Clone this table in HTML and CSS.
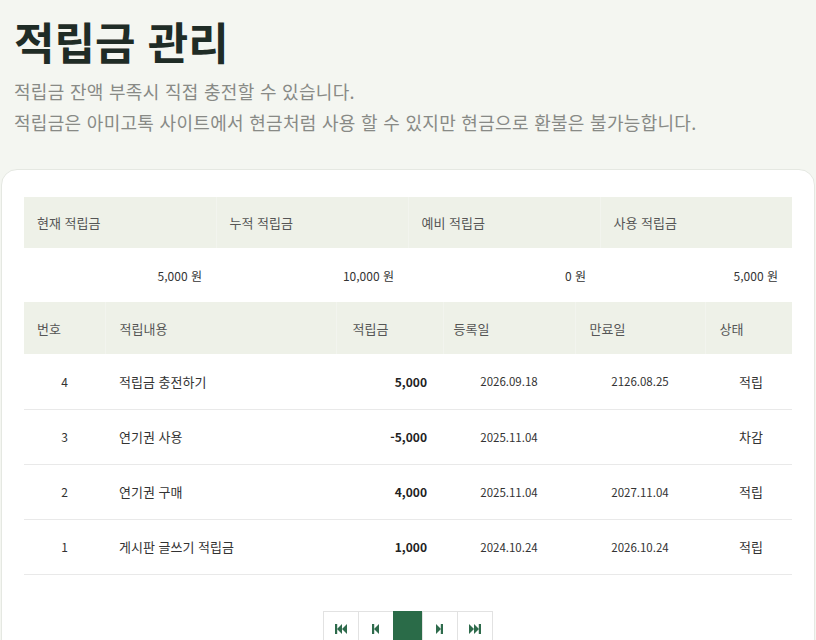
FILE: index.html
```html
<!DOCTYPE html>
<html lang="ko">
<head>
<meta charset="utf-8">
<title>적립금 관리</title>
<link rel="stylesheet" href="styles.css">
</head>
<body>
<header class="page-head">
  <h1 class="title">적립금 관리</h1>
  <p class="desc">적립금 잔액 부족시 직접 충전할 수 있습니다.<br>적립금은 아미고톡 사이트에서 현금처럼 사용 할 수 있지만 현금으로 환불은 불가능합니다.</p>
</header>
<main class="card">
  <table class="summary">
    <thead>
      <tr><th>현재 적립금</th><th>누적 적립금</th><th>예비 적립금</th><th>사용 적립금</th></tr>
    </thead>
    <tbody>
      <tr><td>5,000 원</td><td>10,000 원</td><td>0 원</td><td>5,000 원</td></tr>
    </tbody>
  </table>
  <table class="list">
    <colgroup>
      <col class="c-no"><col class="c-desc"><col class="c-amt"><col class="c-reg"><col class="c-exp"><col class="c-st">
    </colgroup>
    <thead>
      <tr><th class="h-no">번호</th><th>적립내용</th><th class="h-amt">적립금</th><th class="h-reg">등록일</th><th>만료일</th><th>상태</th></tr>
    </thead>
    <tbody>
      <tr><td class="no">4</td><td class="txt">적립금 충전하기</td><td class="amt">5,000</td><td class="date">2026.09.18</td><td class="date">2126.08.25</td><td class="st">적립</td></tr>
      <tr><td class="no">3</td><td class="txt">연기권 사용</td><td class="amt">-5,000</td><td class="date">2025.11.04</td><td class="date"></td><td class="st">차감</td></tr>
      <tr><td class="no">2</td><td class="txt">연기권 구매</td><td class="amt">4,000</td><td class="date">2025.11.04</td><td class="date">2027.11.04</td><td class="st">적립</td></tr>
      <tr><td class="no">1</td><td class="txt">게시판 글쓰기 적립금</td><td class="amt">1,000</td><td class="date">2024.10.24</td><td class="date">2026.10.24</td><td class="st">적립</td></tr>
    </tbody>
  </table>
  <nav class="pager" aria-label="페이지">
    <a class="pg" href="#" aria-label="처음">
      <svg width="12" height="10" viewBox="0 0 12 10"><rect x="0" y="0" width="2.2" height="10"/><polygon points="7,0 2,5 7,10"/><polygon points="12,0 7,5 12,10"/></svg>
    </a>
    <a class="pg" href="#" aria-label="이전">
      <svg width="7" height="10" viewBox="0 0 7 10"><rect x="0" y="0" width="2.2" height="10"/><polygon points="7,0 2,5 7,10"/></svg>
    </a>
    <span class="pg current" aria-current="page" aria-label="1"></span>
    <a class="pg" href="#" aria-label="다음">
      <svg width="7" height="10" viewBox="0 0 7 10"><polygon points="0,0 5,5 0,10"/><rect x="4.8" y="0" width="2.2" height="10"/></svg>
    </a>
    <a class="pg" href="#" aria-label="마지막">
      <svg width="12" height="10" viewBox="0 0 12 10"><polygon points="0,0 5,5 0,10"/><polygon points="5,0 10,5 5,10"/><rect x="9.8" y="0" width="2.2" height="10"/></svg>
    </a>
  </nav>
</main>
</body>
</html>
```
FILE: styles.css
```css
* { box-sizing: border-box; }

html, body {
  margin: 0;
  padding: 0;
}

body {
  background: #f4f6f1;
  font-family: "Noto Sans CJK KR", "Noto Sans", sans-serif;
  color: #333;
}

.page-head {
  padding: 16px 14px 0;
}

.title {
  margin: 0;
  font-size: 44px;
  line-height: 50px;
  font-weight: 700;
  color: #1f2c26;
}

.desc {
  margin: 10px 0 0;
  font-size: 18px;
  line-height: 31px;
  letter-spacing: 0.3px;
  color: #888a86;
}

.card {
  margin: 31px 1px 0;
  background: #fff;
  border: 1px solid #e5e8e2;
  border-radius: 16px;
  padding: 27px 22px 40px;
}

table {
  width: 100%;
  border-collapse: collapse;
  table-layout: fixed;
  font-size: 12px;
}

th {
  background: #eef1e8;
  font-weight: 400;
  font-size: 13px;
  color: #555;
  text-align: left;
  padding: 0 0 0 13px;
  border-right: 1px solid #f2f4ee;
}

th:last-child { border-right: 0; }

.summary th { height: 51px; }

.summary td {
  height: 54px;
  text-align: right;
  padding-right: 14px;
  color: #333;
}

.list th { height: 52px; padding-left: 14px; }
.list th.h-no { padding-left: 13px; }
.list th.h-amt { padding-left: 16px; }
.list th.h-reg { padding-left: 10px; }

.c-no { width: 81px; }
.c-desc { width: 231px; }
.c-amt { width: 107px; }
.c-reg { width: 132px; }
.c-exp { width: 130px; }
.c-st { width: 87px; }

.list td {
  height: 55px;
  border-bottom: 1px solid #e9e9e9;
  color: #333;
}

.list td.no { text-align: center; }
.list td.txt { padding-left: 14px; font-size: 13px; }
.list td.amt { text-align: right; padding-right: 16px; font-weight: 700; color: #222; }
.list td.date { text-align: center; font-size: 11.5px; }
.list td.st { text-align: center; padding-left: 6px; font-size: 13px; }

.pager {
  display: flex;
  justify-content: center;
  margin-top: 36px;
}

.pg {
  display: flex;
  align-items: center;
  justify-content: center;
  width: 36px;
  height: 36px;
  border: 1px solid #e2e2e2;
  margin-left: -1px;
  background: #fff;
  fill: #2e6b4c;
  text-decoration: none;
}

.pg.current {
  width: 30px;
  background: #2a6b48;
  border-color: #2a6b48;
}
```
